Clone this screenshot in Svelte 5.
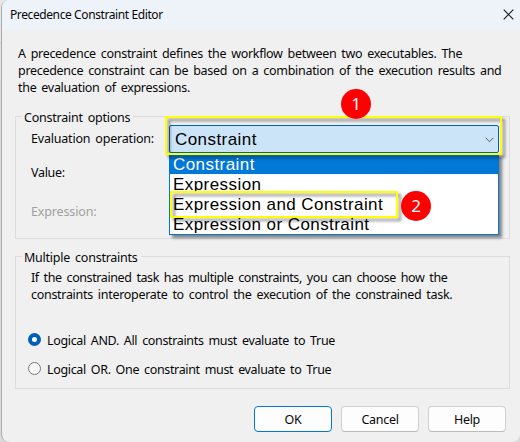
<script>
  const operations = ['Constraint', 'Expression', 'Expression and Constraint', 'Expression or Constraint'];
  let operation = $state('Constraint');
  let logic = $state('and');
  const choices = [
    { id: 'and', label: 'Logical AND. All constraints must evaluate to True' },
    { id: 'or', label: 'Logical OR. One constraint must evaluate to True' }
  ];
</script>

<div class="backdrop">
  <main class="dialog">
    <header>
      <h1>Precedence Constraint Editor</h1>
      <svg class="close" viewBox="0 0 11 11" width="11" height="11" aria-label="Close">
        <path d="M.7.7l9.6 9.6M10.3.7L.7 10.3" fill="none" stroke="#1a1a1a" stroke-width="1.15" />
      </svg>
    </header>

    <div class="content">
      <p class="intro">
        <span>A precedence constraint defines the workflow between two executables. The</span>
        <span>precedence constraint can be based on a combination of the execution results and</span>
        <span>the evaluation of expressions.</span>
      </p>

      <section class="group options">
        <h2>Constraint options</h2>
        <div class="labels">
          <span class="evaluation">Evaluation operation:</span>
          <span class="value">Value:</span>
          <span class="expression">Expression:</span>
        </div>
        <div class="picker">
          <div class="combo">
            <span>{operation}</span>
            <svg viewBox="0 0 9 6" width="9" height="6">
              <path d="M.6.8l3.9 3.9L8.4.8" fill="none" stroke="#555" stroke-width="1" />
            </svg>
          </div>
          <div class="list">
            {#each operations as item}
              <div class="item" class:selected={item === operation}>{item}</div>
            {/each}
          </div>
          <div class="mark first"></div>
          <div class="mark second"></div>
          <b class="badge one">1</b>
          <b class="badge two">2</b>
        </div>
      </section>

      <section class="group multiple">
        <h2>Multiple constraints</h2>
        <p class="note">
          <span class="lead">If the constrained task has multiple constraints, you can choose how the</span>
          <span>constraints interoperate to control the execution of the constrained task.</span>
        </p>
        <div class="choices">
          {#each choices as choice}
            <div class="choice">
              <i class="radio" class:on={choice.id === logic}></i>
              <span>{choice.label}</span>
            </div>
          {/each}
        </div>
      </section>

      <footer>
        <div class="button default"><span>OK</span></div>
        <div class="button"><span>Cancel</span></div>
        <div class="button"><span>Help</span></div>
      </footer>
    </div>
  </main>
</div>

<style>
  :global(body) { margin: 0; overflow: hidden; }
  .backdrop {
    width: 520px; height: 442px; box-sizing: border-box; padding-left: 1px;
    background: linear-gradient(#e4e7ea 0 42px, #d4d4d4 42px 43px, #e2e2e2 43px 81px, #dadada 81px);
    font: 12.5px/17px "Noto Sans", sans-serif; letter-spacing: -.3px; word-spacing: 2px;
    color: #080808; overflow: hidden;
  }
  .dialog {
    width: 519px; height: 442px; box-sizing: border-box; background: #f0f0f0;
    border-left: 1px solid #aaa; border-radius: 8px 0 8px 8px; overflow: hidden;
    display: flex; flex-direction: column;
  }
  h1, h2, p { margin: 0; font: inherit; }
  span, h1, h2 { white-space: nowrap; }
  header {
    height: 29px; flex: none; background: #eef3f9; display: flex; box-sizing: border-box;
    justify-content: space-between; align-items: center; padding: 0 6px 1px 8px;
  }
  h1 { font-size: 12px; letter-spacing: -.4px; word-spacing: 0; }
  .close { flex: none; }
  .content { display: flex; flex-direction: column; padding: 16px 10px 0 13px; }
  .intro { display: flex; flex-direction: column; height: 71px; padding-left: 3px; }
  .group { position: relative; border: 1px solid #dcdcdc; box-sizing: border-box; width: 495px; }
  h2 { width: max-content; margin: -8px 0 0 6px; padding: 0 3px 0 2px; background: #f0f0f0; letter-spacing: -.24px; }
  .options { height: 123px; margin-bottom: 17px; }
  .labels { display: flex; flex-direction: column; padding: 4px 0 0 15px; }
  .evaluation { letter-spacing: -.2px; }
  .value { margin-top: 17px; }
  .expression { margin-top: 22px; color: #a0a0a0; letter-spacing: -.15px; }
  .picker {
    position: absolute; left: 153px; top: 8px; width: 330px;
    font: 17px/20px "Liberation Sans", sans-serif; letter-spacing: .43px; word-spacing: 0; color: #000;
  }
  .combo {
    height: 28px; box-sizing: border-box; border: 1px solid #005fb8; border-radius: 2px; background: #cce4f7;
    display: flex; justify-content: space-between; align-items: center; padding: 1px 4px 0 5px;
  }
  .list {
    border: 1px solid #0078d7; background: #fff; width: 330px; height: 82px; box-sizing: border-box;
    box-shadow: 3px 3px 3px #0007;
  }
  .item { height: 20px; line-height: 22px; padding-left: 3px; white-space: nowrap; }
  .selected { background: #0078d7; color: #fff; }
  .mark { position: absolute; border: 2px solid #ff0; box-sizing: border-box; filter: drop-shadow(3px 3px 1.5px #0007); }
  .first { left: -4px; top: -9px; width: 337px; height: 39px; }
  .second { left: 1px; top: 66px; width: 228px; height: 27px; }
  .badge {
    position: absolute; width: 30px; height: 30px; border-radius: 50%; background: #f00; color: #fff;
    font: 17px/30px "Noto Sans", sans-serif; text-align: center; letter-spacing: 0;
  }
  .one { left: 172px; top: -36px; }
  .two { left: 232px; top: 66px; }
  .multiple { height: 133px; }
  .note { display: flex; flex-direction: column; padding: 3px 0 0 15px; }
  .lead { letter-spacing: -.4px; }
  .choices { display: flex; flex-direction: column; gap: 12px; padding: 29px 0 0 12px; }
  .choice { display: flex; align-items: center; gap: 6px; letter-spacing: -.34px; }
  .radio {
    width: 13px; height: 13px; box-sizing: border-box; border: 1px solid #777; border-radius: 50%;
    background: #f7f7f7; position: relative; top: -1px;
  }
  .on { border: 4px solid #005fb8; background: #fff; }
  footer { display: flex; justify-content: flex-end; gap: 9px; padding: 17px 4px 0 0; }
  .button {
    width: 78px; height: 26px; box-sizing: border-box; border: 1px solid #d0d0d0; border-bottom-color: #bbb;
    border-radius: 4px; background: #fdfdfd; display: flex; justify-content: center; align-items: center;
  }
  .default { border-color: #0078d4; }
</style>
